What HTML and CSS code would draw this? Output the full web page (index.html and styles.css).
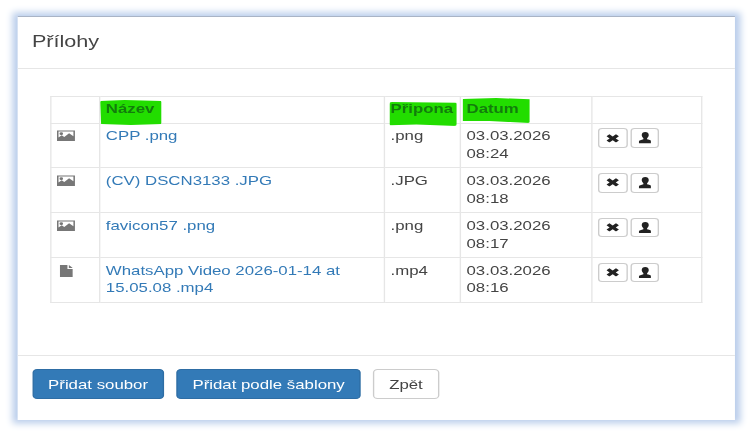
FILE: index.html
```html
<!DOCTYPE html>
<html lang="cs">
<head>
<meta charset="utf-8">
<title>Přílohy</title>
<link rel="stylesheet" href="styles.css">
</head>
<body>
<svg class="defs" width="0" height="0" aria-hidden="true">
  <symbol id="i-picture" viewBox="0 0 15 13">
    <path fill-rule="evenodd" d="M0 .5h15v12H0zM1.300 1.800v6.600l2.600-2.500 2.200 2 4-4.300 3.600 3.600V1.800zM3.600 2.600a1.500 1.500 0 1 1 0 3 1.500 1.500 0 0 1 0-3z"/>
  </symbol>
  <symbol id="i-file" viewBox="0 0 11 14">
    <path d="M0 0h6.500v4.500H11V14H0zM7.700 0 11 3.300H7.700z"/>
  </symbol>
  <symbol id="i-remove" viewBox="0 0 12 11">
    <path d="M3 .3 6 3.200 9 .3l2.700 2.600L8.800 5.500l2.900 2.700L9 10.700 6 7.900l-3 2.800L.3 8.200l2.900-2.700L.3 2.900z"/>
  </symbol>
  <symbol id="i-user" viewBox="0 0 12 14">
    <path d="M6 0c2 0 3.200 1.500 3.200 3.700 0 1.700-.7 3-1.500 3.800v1.300c1.700.7 4.300 1.400 4.300 3V14H0v-2.200c0-1.600 2.600-2.300 4.300-3V7.500C3.500 6.700 2.800 5.400 2.800 3.700 2.800 1.500 4 0 6 0z"/>
  </symbol>
</svg>
<div class="stage">
  <section class="panel">
    <header class="panel-head"><h1 class="title">Přílohy</h1></header>
    <div class="panel-body">
      <table class="files">
        <colgroup>
          <col class="c-icon"><col class="c-name"><col class="c-ext"><col class="c-date"><col class="c-act">
        </colgroup>
        <thead>
          <tr>
            <th></th>
            <th><span class="mark mark-a"></span><span class="label">Název</span></th>
            <th><span class="mark mark-b"></span><span class="label">Připona</span></th>
            <th><span class="mark mark-c"></span><span class="label">Datum</span></th>
            <th></th>
          </tr>
        </thead>
        <tbody>
          <tr>
            <td><svg class="ic-pic"><use href="#i-picture"/></svg></td>
            <td><a href="#">CPP .png</a></td>
            <td>.png</td>
            <td>03.03.2026<br>08:24</td>
            <td><button class="mini"><svg class="ic-x"><use href="#i-remove"/></svg></button><button class="mini"><svg class="ic-u"><use href="#i-user"/></svg></button></td>
          </tr>
          <tr>
            <td><svg class="ic-pic"><use href="#i-picture"/></svg></td>
            <td><a href="#">(CV) DSCN3133 .JPG</a></td>
            <td>.JPG</td>
            <td>03.03.2026<br>08:18</td>
            <td><button class="mini"><svg class="ic-x"><use href="#i-remove"/></svg></button><button class="mini"><svg class="ic-u"><use href="#i-user"/></svg></button></td>
          </tr>
          <tr>
            <td><svg class="ic-pic"><use href="#i-picture"/></svg></td>
            <td><a href="#">favicon57 .png</a></td>
            <td>.png</td>
            <td>03.03.2026<br>08:17</td>
            <td><button class="mini"><svg class="ic-x"><use href="#i-remove"/></svg></button><button class="mini"><svg class="ic-u"><use href="#i-user"/></svg></button></td>
          </tr>
          <tr>
            <td><svg class="ic-file"><use href="#i-file"/></svg></td>
            <td><a href="#">WhatsApp Video 2026-01-14 at 15.05.08 .mp4</a></td>
            <td>.mp4</td>
            <td>03.03.2026<br>08:16</td>
            <td><button class="mini"><svg class="ic-x"><use href="#i-remove"/></svg></button><button class="mini"><svg class="ic-u"><use href="#i-user"/></svg></button></td>
          </tr>
        </tbody>
      </table>
    </div>
    <footer class="panel-foot">
      <button class="btn btn-primary">Přidat soubor</button>
      <button class="btn btn-primary">Přidat podle šablony</button>
      <button class="btn btn-default">Zpět</button>
    </footer>
  </section>
</div>
</body>
</html>
```
FILE: styles.css
```css
html, body {
  margin: 0;
  height: 100%;
  overflow: hidden;
  background: #fff;
}
.defs { display: block; }
.stage {
  width: 555px;
  box-sizing: border-box;
  padding: 16px 0 0 13.270px;
  transform: scaleX(1.356);
  transform-origin: 0 0;
  filter: blur(0.5px);
  font-family: "Liberation Sans", Arial, sans-serif;
  font-size: 12.400px;
  line-height: 17.700px;
  color: #444;
}
.panel {
  width: 528.800px;
  height: 404px;
  display: flex;
  flex-direction: column;
  background: #fff;
  border-top: 1px solid #a9b4c6;
  box-sizing: border-box;
  box-shadow: 0 0 6px 4.400px #b9cdeb;
}
.panel-head {
  height: 52px;
  box-sizing: border-box;
  padding: 13px 10.300px;
  border-bottom: 1px solid #e6e6e6;
}
.title {
  margin: 0;
  font-size: 15.930px;
  font-weight: 400;
  line-height: 23px;
}
.panel-body {
  flex: 1;
  padding: 27px 0 0 23.800px;
}
.files {
  width: 479.500px;
  table-layout: fixed;
  border-collapse: collapse;
  border: 1px solid #e6e6e6;
}
.c-icon { width: 35.600px; }
.c-name { width: 210px; }
.c-ext { width: 56px; }
.c-date { width: 97.300px; }
.c-act { width: 80.600px; }
.files th, .files td {
  border: 1px solid #e6e6e6;
  vertical-align: top;
  text-align: left;
}
.files td {
  padding: 4.700px 4.400px 3.650px;
}
.files th {
  position: relative;
  padding: 4px 4.400px;
  color: #137c0c;
  font-weight: 700;
}
.label { position: relative; }
.mark {
  position: absolute;
  background: #22dd00;
  border-radius: 2px;
}
.mark-a {
  left: 0;
  top: 3px;
  width: 45.700px;
  height: 25px;
  clip-path: polygon(0 4%, 40% 0, 100% 4%, 100% 96%, 50% 100%, 2% 96%);
}
.mark-b {
  left: 3.700px;
  top: 5px;
  width: 49.400px;
  height: 24px;
  clip-path: polygon(0 0, 100% 3%, 100% 100%, 40% 94%, 0 97%);
}
.mark-c {
  left: 1.500px;
  top: 1px;
  width: 49.400px;
  height: 25px;
  clip-path: polygon(0 4%, 50% 0, 100% 5%, 100% 100%, 40% 92%, 0 92%);
}
a {
  color: #337ab7;
  text-decoration: none;
}
.ic-pic, .ic-file {
  display: block;
  fill: #777;
  margin-top: 2px;
}
.ic-pic { width: 13.300px; height: 11.500px; }
.ic-file { width: 9.700px; height: 12.400px; margin-left: 1.500px; }
.mini {
  width: 21.400px;
  height: 19.500px;
  padding: 0;
  margin: 0 2.200px 0 0;
  display: inline-flex;
  align-items: center;
  justify-content: center;
  vertical-align: top;
  background: #fff;
  border: 1px solid #ccc;
  border-radius: 3px;
}
.mini svg { fill: #222; display: block; }
.ic-x { width: 9.700px; height: 8.850px; }
.ic-u { width: 9.700px; height: 11.500px; }
.panel-foot {
  border-top: 1px solid #e6e6e6;
  box-sizing: border-box;
  height: 65px;
  padding: 13px 10.300px 0;
  display: flex;
  gap: 9px;
  align-items: flex-start;
}
.btn {
  height: 30px;
  padding: 7px 10.900px 4px;
  box-sizing: border-box;
  font: inherit;
  border: 1px solid;
  border-radius: 3.500px;
}
.btn-primary {
  background: #337ab7;
  border-color: #2e6da4;
  color: #fff;
}
.btn-default {
  background: #fff;
  border-color: #ccc;
  color: #444;
}
```
